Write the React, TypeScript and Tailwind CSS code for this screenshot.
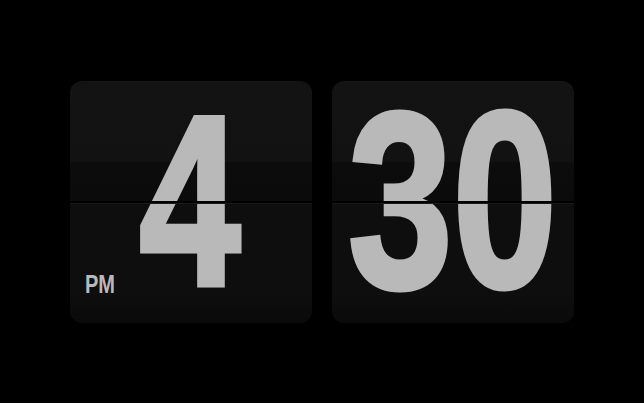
import React from 'react';

function FlipCard({ value, label, big }: { value: string; label?: string; big?: boolean }) {
  return (
    <div className="relative w-[242px] h-[242px] rounded-[12px] overflow-hidden bg-[linear-gradient(to_bottom,#131313_0%,#121212_33%,#0c0c0c_34%,#0b0b0b_49.5%,#0e0e0e_50.5%,#0e0e0e_88%,#0a0a0a_100%)]">
      {/* digits */}
      <div className="absolute inset-0 flex items-center justify-center pb-[2px]">
        <span
          className={`block font-['Liberation_Sans',Arial,sans-serif] font-bold leading-none text-[#b9b9b9] [-webkit-text-stroke:5px_#b9b9b9] scale-x-[0.75] whitespace-nowrap ${
            big ? 'text-[251px] tracking-[0px]' : 'text-[243px] tracking-[2px]'
          }`}
        >
          {value}
        </span>
      </div>
      {/* hinge line */}
      <div className="absolute left-0 right-0 top-[120px] h-[2px] bg-black" />
      <div className="absolute left-0 right-0 top-[122px] h-px bg-[#1a1a1a]" />
      {label && (
        <div className="absolute left-[15px] bottom-[26px] font-['Liberation_Sans',Arial,sans-serif] font-bold text-[25px] leading-none text-[#b9b9b9] scale-x-[0.8] origin-left">
          {label}
        </div>
      )}
    </div>
  );
}

export default function App() {
  return (
    <div className="w-full h-screen bg-black flex items-center justify-center gap-[20px]">
      <FlipCard value="4" label="PM" />
      <FlipCard value="30" big />
    </div>
  );
}
